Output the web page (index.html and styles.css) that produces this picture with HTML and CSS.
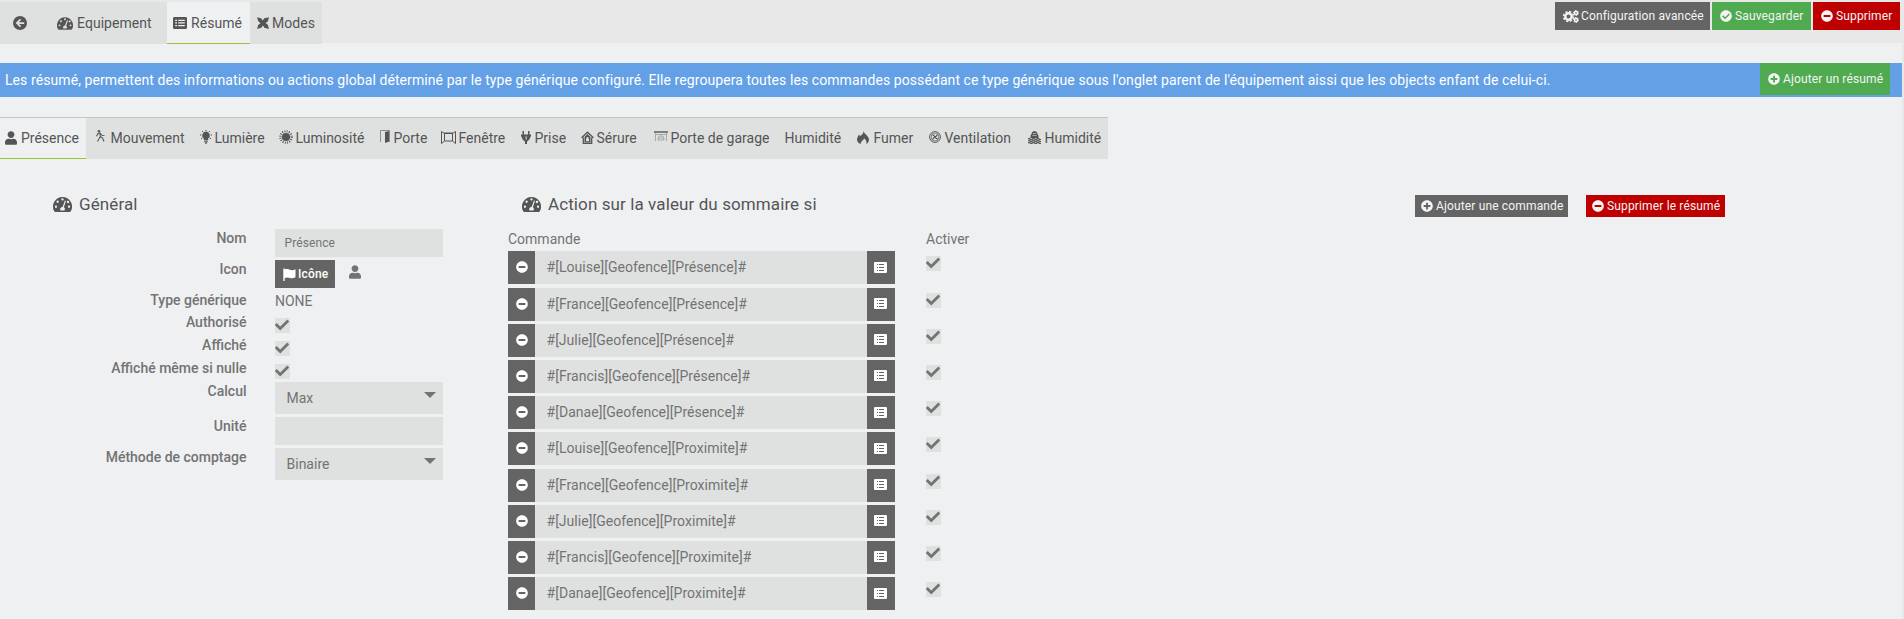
FILE: index.html
```html
<!DOCTYPE html>
<html lang="fr">
<head>
<meta charset="utf-8">
<title>Résumé</title>
<link rel="stylesheet" href="styles.css">
</head>
<body>
<svg class="defs" width="0" height="0">
  <symbol id="minus" viewBox="0 0 512 512"><path fill-rule="evenodd" d="M256 8C119 8 8 119 8 256s111 248 248 248 248-111 248-248S393 8 256 8zM124 296c-6.600 0-12-5.400-12-12v-56c0-6.600 5.400-12 12-12h264c6.600 0 12 5.400 12 12v56c0 6.600-5.400 12-12 12H124z"/></symbol>
  <symbol id="plus" viewBox="0 0 512 512"><path d="M256 8C119 8 8 119 8 256s111 248 248 248 248-111 248-248S393 8 256 8zm144 276c0 6.600-5.400 12-12 12h-92v92c0 6.600-5.400 12-12 12h-56c-6.600 0-12-5.400-12-12v-92h-92c-6.600 0-12-5.400-12-12v-56c0-6.600 5.400-12 12-12h92v-92c0-6.600 5.400-12 12-12h56c6.600 0 12 5.400 12 12v92h92c6.600 0 12 5.400 12 12v56z"/></symbol>
  <symbol id="okay" viewBox="0 0 512 512"><path d="M504 256c0 136.967-111.033 248-248 248S8 392.967 8 256 119.033 8 256 8s248 111.033 248 248zM227.314 387.314l184-184c6.248-6.248 6.248-16.379 0-22.627l-22.627-22.627c-6.248-6.249-16.379-6.249-22.628 0L216 308.118l-70.059-70.059c-6.248-6.248-16.379-6.248-22.628 0l-22.627 22.627c-6.248 6.248-6.248 16.379 0 22.627l104 104c6.249 6.249 16.379 6.249 22.628.001z"/></symbol>
  <symbol id="back" viewBox="0 0 16 16"><circle cx="8" cy="8" r="8"/><path d="M8.600 3.800L4.400 8l4.200 4.200M4.800 8h8" fill="none" stroke="#dfe1e0" stroke-width="2"/></symbol>
  <symbol id="check" viewBox="0 0 512 512"><path d="M173.898 439.404l-166.400-166.400c-9.997-9.997-9.997-26.206 0-36.204l36.203-36.204c9.997-9.998 26.207-9.998 36.204 0L192 312.690 432.095 72.596c9.997-9.997 26.207-9.997 36.204 0l36.203 36.204c9.997 9.997 9.997 26.206 0 36.204l-294.400 294.401c-9.998 9.997-26.207 9.997-36.204-.001z"/></symbol>
  <symbol id="user" viewBox="0 0 448 512"><path d="M224 256c70.700 0 128-57.300 128-128S294.700 0 224 0 96 57.300 96 128s57.300 128 128 128zm89.600 32h-16.700c-22.200 10.200-46.900 16-72.900 16s-50.600-5.800-72.900-16h-16.700C60.200 288 0 348.200 0 422.400V464c0 26.500 21.500 48 48 48h352c26.500 0 48-21.500 48-48v-41.600c0-74.200-60.200-134.400-134.400-134.400z"/></symbol>
  <symbol id="gauge" viewBox="0 0 18 14"><path fill-rule="evenodd" d="M9 0a9 9 0 0 0-7.800 13.500c.2.300.5.500.9.500h13.800c.4 0 .7-.2.9-.5A9 9 0 0 0 9 0zM9 1.100a1.100 1.100 0 1 1 0 2.200 1.100 1.100 0 0 1 0-2.200zM4.400 3.300a1.100 1.100 0 1 1 0 2.200 1.100 1.100 0 0 1 0-2.200zM2.800 8a1.100 1.100 0 1 1 0 2.200A1.100 1.100 0 0 1 2.800 8zM15.200 8a1.100 1.100 0 1 1 0 2.200 1.100 1.100 0 0 1 0-2.200zM14 3.500a1.100 1.100 0 1 1-.2 2.100 1.100 1.100 0 0 1 .2-2.100zM11.300 3.200l1 .3-2 6.200a2.200 2.200 0 0 1 .5 3H7.200a2.200 2.200 0 0 1 1.900-3.400z"/></symbol>
  <symbol id="table" viewBox="0 0 14 12"><path fill-rule="evenodd" d="M1.300 0h11.400A1.300 1.300 0 0 1 14 1.300v9.400a1.300 1.300 0 0 1-1.300 1.300H1.300A1.300 1.300 0 0 1 0 10.700V1.300A1.300 1.300 0 0 1 1.300 0zM2.200 2.700v1.300h1.800V2.700zm3 0v1.300h6.600V2.700zM2.200 5.300v1.300h1.800V5.300zm3 0v1.300h6.600V5.300zM2.200 7.900v1.300h1.800V7.900zm3 0v1.300h6.600V7.900z"/></symbol>
  <symbol id="list" viewBox="0 0 13 11"><path fill-rule="evenodd" d="M1 0h11a1 1 0 0 1 1 1v9a1 1 0 0 1-1 1H1a1 1 0 0 1-1-1V1a1 1 0 0 1 1-1zM3 2v1h1V2zm2 0v1h5V2zM3 5v1h1V5zM5 5v1h5V5zM3 8v1h1V8zm2 0v1h5V8z"/></symbol>
  <symbol id="modes" viewBox="0 0 12 12"><path d="M0 .3l4 1 1.500 2.200L7.500 1.200 12 .3 10.800 4.500 8.500 6l2.300 1.800L12 12 7.500 10.800 6 8.500 4.200 10.800 0 12l1.300-4L3.500 6.200 1.300 4.300z"/><path d="M1 2.500h4M7.500 1.500l1.800 3M11 9L7 10M1.500 8l3 2" stroke="#555" stroke-width="1.200"/></symbol>
  <symbol id="gears" viewBox="0 0 16 13"><g fill="none" stroke="currentColor"><circle cx="5.500" cy="6.500" r="3.200" stroke-width="2.400"/><circle cx="5.500" cy="6.500" r="4.900" stroke-width="1.600" stroke-dasharray="2.200 1.650"/><circle cx="13" cy="3" r="1.600" stroke-width="1.600"/><circle cx="13" cy="3" r="2.500" stroke-width="1" stroke-dasharray="1.300 1.320"/><circle cx="13" cy="10" r="1.600" stroke-width="1.600"/><circle cx="13" cy="10" r="2.500" stroke-width="1" stroke-dasharray="1.300 1.320"/></g></symbol>
  <symbol id="flag" viewBox="0 0 13 13"><path d="M.3.500h1.400v1C4 .5 5.500 1.300 7.500 2c1.600.5 3.200.2 5-.7v8c-2 1.100-3.500 1.300-5.500.7-2-.7-3.300-.8-5.300 0v3H.300z"/></symbol>
  <symbol id="walk" viewBox="0 0 9 12"><circle cx="3" cy="1.300" r="1.300"/><path d="M3.800 3L4.300 6.500 1.500 11.500M4.300 6.500L6.500 8l1.500 3.500M.5 6.200l1.500-2.700L4 3l2 2.300 2.500.2" fill="none" stroke="currentColor" stroke-width="1.100"/></symbol>
  <symbol id="bulb" viewBox="0 0 12 14"><path d="M6 1.500a3.800 3.800 0 0 0-2.200 6.900V10h4.400V8.400A3.800 3.800 0 0 0 6 1.500zM4.200 10.500h3.600v1.200H4.200zM4.500 12.200h3L6.700 13.800H5.300z"/><path d="M6 0v1M2 1l1 1M10 1l-1 1M0 5h1.400M10.600 5H12M1 8.800l1.200-.8M11 8.800L9.800 8" stroke="currentColor"/></symbol>
  <symbol id="sun" viewBox="0 0 14 14"><circle cx="7" cy="7" r="4.100"/><circle cx="7" cy="7" r="5.700" fill="none" stroke="currentColor" stroke-width="2.200" stroke-dasharray=".9 1.338"/></symbol>
  <symbol id="door" viewBox="0 0 10 13"><path d="M.5 12V.5h9V12" fill="none" stroke="currentColor" opacity=".6"/><path d="M5 2L9 1v10.500L5 13z"/></symbol>
  <symbol id="window" viewBox="0 0 15 13"><path d="M3.500 2.500h8v7.500h-8zM.5.500l3 2V10l-3 2.500zM14.500.5l-3 2V10l3 2.500z" fill="none" stroke="currentColor"/><path d="M3 1.800h9" stroke="currentColor" stroke-width=".7"/></symbol>
  <symbol id="plug" viewBox="0 0 10 13"><path d="M1.500 0h1.500v3.500h4V0h1.500v3.500H10v2H9.500L8.700 8 6 10.800V13H4v-2.200L1.300 8 .5 5.500H0v-2h1.500z"/><path d="M5.500 5L4.500 7h1.300L4.800 8.800" fill="none" stroke="#dfe1e0" stroke-width=".7"/></symbol>
  <symbol id="home" viewBox="0 0 13 13"><path d="M.6 6.800L6.500 1.200l5.900 5.600M2.300 6.500v5.800h8.400V6.500" fill="none" stroke="currentColor" stroke-width="1.300"/><path fill-rule="evenodd" d="M6.500 3L9.500 6v5.500h-6V6zM5.700 6v1.500H5v2.700h3V7.500h-.7V6z"/></symbol>
  <symbol id="garage" viewBox="0 0 14 11"><path d="M0 1h14" stroke="currentColor" stroke-width="1.400"/><g opacity=".5" fill="none" stroke="currentColor"><path d="M1.500 2v8M12.500 2v8M2 3.500h10M4.500 6.500L5.200 5h3.600l.7 1.500M4 7h6v2H4z" stroke-width=".8"/></g></symbol>
  <symbol id="fire" viewBox="0 0 12 13"><path d="M6.500 0c.4 2.700 4.500 4.300 5.300 7.600.5 2.200-.4 4.200-2.500 5.400.7-2.600-.6-4.200-2.200-5.700C6.600 9.500 3.800 10 3.800 13 1 12.300-.3 10 .1 7.700.4 5.900 1.400 5 2 3.500c.5.500.8 1.100.9 1.800C4.700 4 6.600 2.500 6.500 0z"/></symbol>
  <symbol id="fan" viewBox="0 0 12 12"><g fill="none" stroke="currentColor"><circle cx="6" cy="6" r="5.400" stroke-width="1"/><circle cx="6" cy="6" r="3.900" stroke-width=".7"/><path d="M3.500 3.800C5 4 5.500 5 6 6s1.500 2 3 2M8.500 3.500C8 5 7 5.500 6 6s-2 1-2.200 2.500" stroke-width="1.200"/></g></symbol>
  <symbol id="humid" viewBox="0 0 13 13"><path d="M2.500 7V4.500L3.500 3l.5-2L6.500 0 9 1l.5 2 1 1.500V7z"/><path d="M4.800 2.500h3.400M4.500 4.500h4" stroke="#dfe1e0" stroke-width=".6"/><path d="M0 8q1.100-1.200 2.200 0t2.200 0 2.200 0 2.200 0 2.200 0 2 0M0 10q1.100-1.200 2.200 0t2.200 0 2.200 0 2.200 0 2.200 0 2 0M0 12q1.100-1.200 2.200 0t2.200 0 2.200 0 2.200 0 2.200 0 2 0" fill="none" stroke="currentColor" stroke-width="1.200"/></symbol>
</svg>

<header class="topbar">
  <nav class="main-tabs">
    <a class="back"><svg class="i14"><use href="#back"/></svg></a>
    <a class="equip"><svg class="gauge"><use href="#gauge"/></svg><span>Equipement</span></a>
    <a class="resume active"><svg class="table"><use href="#table"/></svg><span>Résumé</span></a>
    <a class="modes"><svg class="i12"><use href="#modes"/></svg><span>Modes</span></a>
  </nav>
  <div class="actions">
    <button class="btn grey config"><svg class="gears"><use href="#gears"/></svg>Configuration avancée</button>
    <button class="btn green save"><svg class="i12"><use href="#okay"/></svg>Sauvegarder</button>
    <button class="btn red remove"><svg class="i12"><use href="#minus"/></svg>Supprimer</button>
  </div>
</header>

<main class="page">
  <div class="alert">
    <p>Les résumé, permettent des informations ou actions global déterminé par le type générique configuré. Elle regroupera toutes les commandes possédant ce type générique sous l'onglet parent de l'équipement aissi que les objects enfant de celui-ci.</p>
    <button class="btn green add"><svg class="i12"><use href="#plus"/></svg>Ajouter un résumé</button>
  </div>

  <nav class="sub-tabs">
    <a class="active"><svg class="s-user"><use href="#user"/></svg>Présence</a>
    <a><svg class="s-walk"><use href="#walk"/></svg>Mouvement</a>
    <a><svg class="s-bulb"><use href="#bulb"/></svg>Lumière</a>
    <a><svg class="s-sun"><use href="#sun"/></svg>Luminosité</a>
    <a><svg class="s-door"><use href="#door"/></svg>Porte</a>
    <a><svg class="s-window"><use href="#window"/></svg>Fenêtre</a>
    <a><svg class="s-plug"><use href="#plug"/></svg>Prise</a>
    <a><svg class="s-home"><use href="#home"/></svg>Sérure</a>
    <a><svg class="s-garage"><use href="#garage"/></svg>Porte de garage</a>
    <a>Humidité</a>
    <a><svg class="s-fire"><use href="#fire"/></svg>Fumer</a>
    <a><svg class="s-fan"><use href="#fan"/></svg>Ventilation</a>
    <a><svg class="s-humid"><use href="#humid"/></svg>Humidité</a>
  </nav>

  <div class="columns">
    <section class="general">
      <h2><svg><use href="#gauge"/></svg>Général</h2>
      <form class="form">
        <label>Nom</label><div class="field input">Présence</div>
        <label>Icon</label><div class="icon-cell"><span class="btn grey"><svg class="flag"><use href="#flag"/></svg>Icône</span><svg class="person"><use href="#user"/></svg></div>
        <label>Type générique</label><div class="plain">NONE</div>
        <label>Authorisé</label><div class="box"><svg><use href="#check"/></svg></div>
        <label>Affiché</label><div class="box"><svg><use href="#check"/></svg></div>
        <label>Affiché même si nulle</label><div class="box"><svg><use href="#check"/></svg></div>
        <label>Calcul</label><div class="field select">Max</div>
        <label>Unité</label><div class="field input"></div>
        <label>Méthode de comptage</label><div class="field select">Binaire</div>
      </form>
    </section>
    <section class="commands">
      <div class="head">
        <h2><svg><use href="#gauge"/></svg>Action sur la valeur du sommaire si</h2>
        <button class="btn grey small cmd"><svg class="i12"><use href="#plus"/></svg>Ajouter une commande</button>
        <button class="btn red small del"><svg class="i12"><use href="#minus"/></svg>Supprimer le résumé</button>
      </div>
      <div class="row titles"><span>Commande</span><span>Activer</span></div>
      <div class="rows">
        <div class="row"><div class="group"><i><svg class="i12"><use href="#minus"/></svg></i><b>#[Louise][Geofence][Présence]#</b><i><svg class="list"><use href="#list"/></svg></i></div><div class="box"><svg><use href="#check"/></svg></div></div>
        <div class="row"><div class="group"><i><svg class="i12"><use href="#minus"/></svg></i><b>#[France][Geofence][Présence]#</b><i><svg class="list"><use href="#list"/></svg></i></div><div class="box"><svg><use href="#check"/></svg></div></div>
        <div class="row"><div class="group"><i><svg class="i12"><use href="#minus"/></svg></i><b>#[Julie][Geofence][Présence]#</b><i><svg class="list"><use href="#list"/></svg></i></div><div class="box"><svg><use href="#check"/></svg></div></div>
        <div class="row"><div class="group"><i><svg class="i12"><use href="#minus"/></svg></i><b>#[Francis][Geofence][Présence]#</b><i><svg class="list"><use href="#list"/></svg></i></div><div class="box"><svg><use href="#check"/></svg></div></div>
        <div class="row"><div class="group"><i><svg class="i12"><use href="#minus"/></svg></i><b>#[Danae][Geofence][Présence]#</b><i><svg class="list"><use href="#list"/></svg></i></div><div class="box"><svg><use href="#check"/></svg></div></div>
        <div class="row"><div class="group"><i><svg class="i12"><use href="#minus"/></svg></i><b>#[Louise][Geofence][Proximite]#</b><i><svg class="list"><use href="#list"/></svg></i></div><div class="box"><svg><use href="#check"/></svg></div></div>
        <div class="row"><div class="group"><i><svg class="i12"><use href="#minus"/></svg></i><b>#[France][Geofence][Proximite]#</b><i><svg class="list"><use href="#list"/></svg></i></div><div class="box"><svg><use href="#check"/></svg></div></div>
        <div class="row"><div class="group"><i><svg class="i12"><use href="#minus"/></svg></i><b>#[Julie][Geofence][Proximite]#</b><i><svg class="list"><use href="#list"/></svg></i></div><div class="box"><svg><use href="#check"/></svg></div></div>
        <div class="row"><div class="group"><i><svg class="i12"><use href="#minus"/></svg></i><b>#[Francis][Geofence][Proximite]#</b><i><svg class="list"><use href="#list"/></svg></i></div><div class="box"><svg><use href="#check"/></svg></div></div>
        <div class="row"><div class="group"><i><svg class="i12"><use href="#minus"/></svg></i><b>#[Danae][Geofence][Proximite]#</b><i><svg class="list"><use href="#list"/></svg></i></div><div class="box"><svg><use href="#check"/></svg></div></div>
      </div>
    </section>
  </div>
</main>
</body>
</html>
```

FILE: styles.css
```css
* { box-sizing: border-box; }
html, body { height: 100%; }
body {
  margin: 0;
  background: #e8e8e9;
  color: #737373;
  font: 14px/20px Roboto, sans-serif;
  overflow: hidden;
}
svg { display: block; flex: none; fill: currentColor; }
.defs { position: absolute; }
.i12 { width: 12px; height: 12px; }
.i14 { width: 14px; height: 14px; }

.topbar { display: flex; justify-content: space-between; height: 43px; padding: 2px 4px 0 0; }
.main-tabs { display: grid; grid-template-columns: 50px 117px 83px 72px; height: 42px; color: #555; position: relative; }
.main-tabs a { display: flex; align-items: center; background: #dfe1e0; letter-spacing: .05px; }
.main-tabs .back { padding-left: 13px; }
.main-tabs .equip { padding-left: 7px; }
.main-tabs .resume { padding-left: 6px; }
.main-tabs .modes { padding-left: 7px; }
.main-tabs a.active { background: #eff0f2; border-bottom: 1px solid #94c935; }
.main-tabs span { margin-left: 4px; }
.main-tabs .gauge { width: 16px; height: 13px; }
.main-tabs .table { width: 14px; height: 12px; }
.main-tabs .modes span { margin-left: 3px; }

.actions { display: flex; gap: 2px; }
.btn {
  display: flex; align-items: center; gap: 3px; height: 28px; padding: 0 0 0 8px;
  border: 0; color: #f4f4f4; font: 12px/18px Roboto, sans-serif; letter-spacing: .15px; white-space: nowrap;
}
.grey { background: #646464; }
.green { background: #50aa50; }
.red { background: #be0000; }
.config { width: 155px; gap: 2px; }
.save { width: 99px; }
.remove { width: 87px; }
.gears { width: 16px; height: 13px; }

.page { width: 1902px; height: 576px; background: #eff0f2; padding-top: 20px; }
.alert { display: flex; justify-content: space-between; height: 34px; padding: 0 12px 0 5px; background: #64a0e6; color: #fff; }
.alert p { margin: 0; line-height: 34px; letter-spacing: .08px; white-space: nowrap; }
.add { width: 130px; height: 32px; }

.sub-tabs {
  display: grid; width: 1108px; height: 42px; margin-top: 20px; color: #555;
  grid-template-columns: 86px 107px 79px 102px 60px 80px 59px 74px 131px 71px 72px 100px 87px;
}
.sub-tabs a { display: flex; align-items: center; background: #dfe1e0; border-top: 1px solid #c4c6c5; padding: 0 0 2px 6.500px; white-space: nowrap; }
.sub-tabs a.active { background: #eff0f2; border-bottom: 1px solid #94c935; padding: 0 0 0 5px; }
.s-user { width: 12px; height: 14px; margin-right: 4px; }
.s-walk { width: 9px; height: 12px; margin: 0 6px 4px 3px; }
.s-bulb { width: 12px; height: 14px; margin: 0 3px 1px 0; }
.s-sun { width: 14px; height: 14px; margin: 0 3px 1px 0; }
.s-door { width: 10px; height: 13px; margin: 0 4px 2px -1px; }
.s-window { width: 15px; height: 13px; margin: 0 3px 0 0; }
.s-plug { width: 10px; height: 13px; margin: 0 4px 0 0; }
.s-home { width: 13px; height: 13px; margin: 0 3px 0 1px; }
.s-garage { width: 14px; height: 11px; margin: 0 3px 2px 0; }
.s-fire { width: 12px; height: 13px; margin: 0 5px 1px 1px; }
.s-fan { width: 12px; height: 12px; margin: 0 4px 1px 1px; }
.s-humid { width: 13px; height: 13px; margin: 0 4px 1px 0; }

.columns { display: grid; grid-template-columns: 508px 1fr; padding-top: 33px; }
h2 { display: flex; align-items: center; gap: 7px; height: 24px; margin: 0; color: #555; font: 17px/24px Roboto, sans-serif; letter-spacing: .1px; }
h2 svg { width: 19px; height: 15px; }
.general h2 { padding-left: 53px; }
.form { display: grid; grid-template-columns: 246px 168px; column-gap: 29px; grid-template-rows: 31px 31px 22px 23px 23px 23px 35px 31px 32px; margin-top: 13px; }
.form label { text-align: right; font-weight: 500; line-height: 19px; margin-right: -.5px; }
.field { background: #dfe1e0; }
.input { height: 28px; padding-left: 9.500px; font-size: 12px; line-height: 29px; letter-spacing: .1px; }
.select { position: relative; height: 32px; padding-left: 11.500px; line-height: 32px; }
.select::after { content: ""; position: absolute; top: 10px; right: 7px; border: 6px solid transparent; border-top-color: #737373; border-bottom: 0; }
.icon-cell { display: flex; gap: 14px; }
.icon-cell .btn { width: 60px; font-weight: 500; gap: 2px; color: #fff; }
.flag { width: 13px; height: 13px; }
.person { width: 12px; height: 14px; margin-top: 5px; }
.plain { line-height: 20px; }
.box { width: 15px; height: 15px; margin-top: 5px; background: #dfe1e0; }
.box svg { width: 14px; height: 14px; margin-left: -.5px; }

.head { display: flex; align-items: flex-start; height: 24px; padding-left: 14px; }
.small { height: 22px; padding-left: 6px; }
.cmd { width: 153px; margin: 3px 0 0 auto; }
.del { width: 139px; margin: 3px 177px 0 18px; }
.row { display: grid; grid-template-columns: 387px 1fr; column-gap: 31px; }
.titles { margin-top: 13px; height: 22px; }
.rows { display: grid; grid-auto-rows: 32px; row-gap: 4.200px; margin-top: .4px; }
.group { display: grid; grid-template-columns: 27px 1fr 28px; height: 32px; letter-spacing: .04px; }
.group i { display: flex; align-items: center; justify-content: center; background: #646464; color: #fff; }
.group i svg { margin-bottom: 1px; }
.group b { background: #dfe1e0; padding-left: 11.500px; font-weight: 400; line-height: 33px; }
.group .list { width: 13px; height: 11px; margin-right: 1px; }
```
